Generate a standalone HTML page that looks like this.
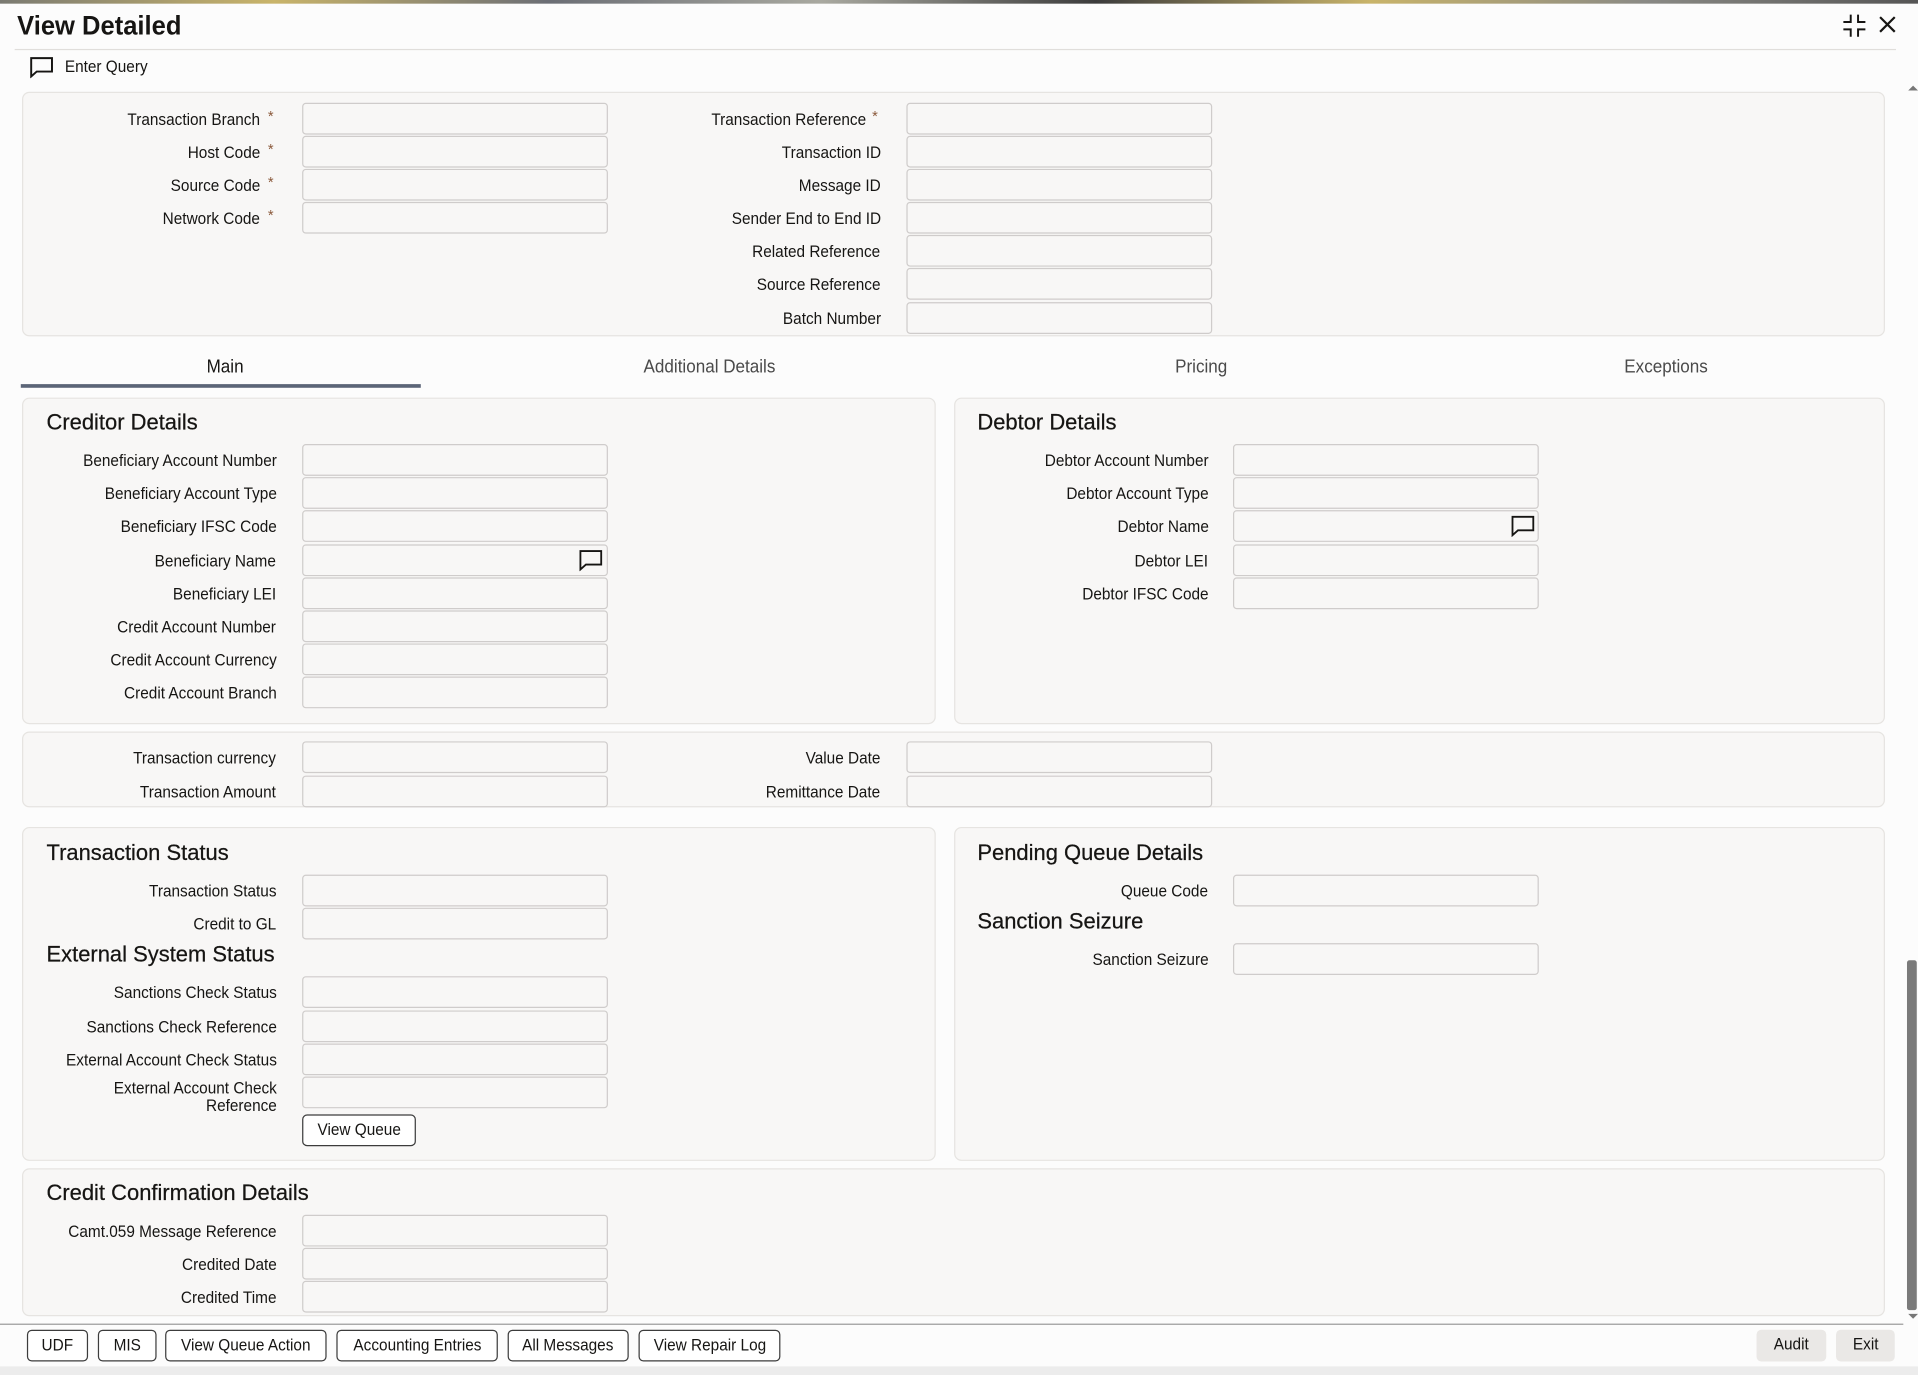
<!DOCTYPE html>
<html><head><meta charset="utf-8"><style>
*{box-sizing:border-box;margin:0;padding:0}
html,body{width:1918px;height:1375px;overflow:hidden;background:#fcfcfc}
#w{position:absolute;left:0;top:0;width:1568px;height:1124px;transform:scale(1.22321,1.2233);transform-origin:0 0;font-family:"Liberation Sans Narrow","Liberation Sans",sans-serif;color:#161513;font-size:13.5px}
.a{position:absolute}
.p{position:absolute;background:#f8f7f6;border:1px solid #e6e4e1;border-radius:6px}
.l{position:absolute;text-align:right;white-space:nowrap;transform:translateY(-50%) scaleX(0.93);transform-origin:right center;line-height:14px}
.i{position:absolute;width:250px;height:26px;border:1px solid #cfcccb;border-radius:3px;background:#f8f7f6;transform:translateY(-50%)}
.h{position:absolute;font-family:"Liberation Sans",sans-serif;font-size:18.5px;transform:translateY(-50%) scaleX(0.97);transform-origin:left center;color:#161513;white-space:nowrap;-webkit-text-stroke:0.2px #161513}
.s{color:#8b5a3c;font-size:12px;position:absolute}
.t{position:absolute;transform:translate(-50%,-50%) scaleX(0.93);font-size:15px;color:#4a4a4a;white-space:nowrap}
.b{position:absolute;top:1087px;height:26px;border:1px solid #3c3c3c;border-radius:4px;background:#fff;text-align:center;line-height:24px;font-size:13.5px;white-space:nowrap}
.b span{display:inline-block;transform:scaleX(0.93)}
</style></head><body><div id="w">
<div class="a" style="left:0;top:0;width:1568px;height:3px;background:linear-gradient(90deg,#7a7a72,#c9b46a,#6b6e75,#a9a9a0,#3c3c3c,#c9b46a,#8a8a85,#555)"></div>
<div class="a" style="left:14px;top:8px;font-family:'Liberation Sans',sans-serif;font-weight:bold;font-size:22px;transform:scaleX(0.95);transform-origin:left">View Detailed</div>
<div class="a" style="left:1506px;top:11px;width:20px;height:20px">
<svg width="20" height="20" viewBox="0 0 20 20" fill="none" stroke="#161513" stroke-width="1.6"><path d="M7 1v6H1M13 1v6h6M7 19v-6H1M13 19v-6h6"/></svg></div>
<div class="a" style="left:1536px;top:13px"><svg width="14" height="14" viewBox="0 0 14 14" stroke="#161513" stroke-width="1.8"><path d="M1 1l12 12M13 1L1 13"/></svg></div>
<div class="a" style="left:12px;top:40px;width:1538px;height:1px;background:#e0dedb"></div>
<div class="a" style="left:24px;top:46px"><svg width="20" height="18" viewBox="0 0 20 18" fill="none" stroke="#161513" stroke-width="1.6"><path d="M1.5 1.5h17v11H6l-4.5 4z"/></svg></div>
<div class="a" style="left:53px;top:47px;transform:scaleX(0.93);transform-origin:left">Enter Query</div>

<div class="p" style="left:18px;top:75px;width:1523px;height:200px"></div>
<div class="p" style="left:18px;top:325px;width:747px;height:267px"></div>
<div class="p" style="left:780px;top:325px;width:761px;height:267px"></div>
<div class="p" style="left:18px;top:598px;width:1523px;height:62px"></div>
<div class="p" style="left:18px;top:676px;width:747px;height:273px"></div>
<div class="p" style="left:780px;top:676px;width:761px;height:273px"></div>
<div class="p" style="left:18px;top:955px;width:1523px;height:121px"></div>

<div class="l" style="right:1355px;top:98px">Transaction Branch</div><span class="s" style="left:219px;top:88px">*</span><div class="i" style="left:247px;top:97px"></div>
<div class="l" style="right:1355px;top:125px">Host Code</div><span class="s" style="left:219px;top:115px">*</span><div class="i" style="left:247px;top:124px"></div>
<div class="l" style="right:1355px;top:152px">Source Code</div><span class="s" style="left:219px;top:142px">*</span><div class="i" style="left:247px;top:151px"></div>
<div class="l" style="right:1355px;top:179px">Network Code</div><span class="s" style="left:219px;top:169px">*</span><div class="i" style="left:247px;top:178px"></div>
<div class="l" style="right:860px;top:98px">Transaction Reference</div><span class="s" style="left:713px;top:88px">*</span><div class="i" style="left:741px;top:97px"></div>
<div class="l" style="right:848px;top:125px">Transaction ID</div><div class="i" style="left:741px;top:124px"></div>
<div class="l" style="right:848px;top:152px">Message ID</div><div class="i" style="left:741px;top:151px"></div>
<div class="l" style="right:848px;top:179px">Sender End to End ID</div><div class="i" style="left:741px;top:178px"></div>
<div class="l" style="right:848px;top:206px">Related Reference</div><div class="i" style="left:741px;top:205px"></div>
<div class="l" style="right:848px;top:233px">Source Reference</div><div class="i" style="left:741px;top:232px"></div>
<div class="l" style="right:848px;top:261px">Batch Number</div><div class="i" style="left:741px;top:260px"></div>

<div class="t" style="left:184px;top:300px;color:#161513">Main</div>
<div class="t" style="left:580px;top:300px">Additional Details</div>
<div class="t" style="left:982px;top:300px">Pricing</div>
<div class="t" style="left:1362px;top:300px">Exceptions</div>
<div class="a" style="left:17px;top:314px;width:327px;height:3px;background:#5b6577"></div>

<div class="h" style="left:38px;top:345px">Creditor Details</div>
<div class="l" style="right:1342px;top:377px">Beneficiary Account Number</div><div class="i" style="left:247px;top:376px"></div>
<div class="l" style="right:1342px;top:404px">Beneficiary Account Type</div><div class="i" style="left:247px;top:403px"></div>
<div class="l" style="right:1342px;top:431px">Beneficiary IFSC Code</div><div class="i" style="left:247px;top:430px"></div>
<div class="l" style="right:1342px;top:459px">Beneficiary Name</div><div class="i" style="left:247px;top:458px"></div>
<div class="a" style="left:473px;top:449px"><svg width="20" height="18" viewBox="0 0 20 18" fill="none" stroke="#161513" stroke-width="1.5"><path d="M1.5 1.5h17v11H6l-4.5 4z"/></svg></div>
<div class="l" style="right:1342px;top:486px">Beneficiary LEI</div><div class="i" style="left:247px;top:485px"></div>
<div class="l" style="right:1342px;top:513px">Credit Account Number</div><div class="i" style="left:247px;top:512px"></div>
<div class="l" style="right:1342px;top:540px">Credit Account Currency</div><div class="i" style="left:247px;top:539px"></div>
<div class="l" style="right:1342px;top:567px">Credit Account Branch</div><div class="i" style="left:247px;top:566px"></div>

<div class="h" style="left:799px;top:345px">Debtor Details</div>
<div class="l" style="right:580px;top:377px">Debtor Account Number</div><div class="i" style="left:1008px;top:376px"></div>
<div class="l" style="right:580px;top:404px">Debtor Account Type</div><div class="i" style="left:1008px;top:403px"></div>
<div class="l" style="right:580px;top:431px">Debtor Name</div><div class="i" style="left:1008px;top:430px"></div>
<div class="a" style="left:1235px;top:421px"><svg width="20" height="18" viewBox="0 0 20 18" fill="none" stroke="#161513" stroke-width="1.5"><path d="M1.5 1.5h17v11H6l-4.5 4z"/></svg></div>
<div class="l" style="right:580px;top:459px">Debtor LEI</div><div class="i" style="left:1008px;top:458px"></div>
<div class="l" style="right:580px;top:486px">Debtor IFSC Code</div><div class="i" style="left:1008px;top:485px"></div>

<div class="l" style="right:1342px;top:620px">Transaction currency</div><div class="i" style="left:247px;top:619px"></div>
<div class="l" style="right:1342px;top:648px">Transaction Amount</div><div class="i" style="left:247px;top:647px"></div>
<div class="l" style="right:848px;top:620px">Value Date</div><div class="i" style="left:741px;top:619px"></div>
<div class="l" style="right:848px;top:648px">Remittance Date</div><div class="i" style="left:741px;top:647px"></div>

<div class="h" style="left:38px;top:697px">Transaction Status</div>
<div class="l" style="right:1342px;top:729px">Transaction Status</div><div class="i" style="left:247px;top:728px"></div>
<div class="l" style="right:1342px;top:756px">Credit to GL</div><div class="i" style="left:247px;top:755px"></div>
<div class="h" style="left:38px;top:780px">External System Status</div>
<div class="l" style="right:1342px;top:812px">Sanctions Check Status</div><div class="i" style="left:247px;top:811px"></div>
<div class="l" style="right:1342px;top:840px">Sanctions Check Reference</div><div class="i" style="left:247px;top:839px"></div>
<div class="l" style="right:1342px;top:867px">External Account Check Status</div><div class="i" style="left:247px;top:866px"></div>
<div class="l" style="right:1342px;top:897px">External Account Check<br>Reference</div><div class="i" style="left:247px;top:893px"></div>
<div class="b" style="left:247px;top:911px;width:93px"><span>View Queue</span></div>

<div class="h" style="left:799px;top:697px">Pending Queue Details</div>
<div class="l" style="right:580px;top:729px">Queue Code</div><div class="i" style="left:1008px;top:728px"></div>
<div class="h" style="left:799px;top:753px">Sanction Seizure</div>
<div class="l" style="right:580px;top:785px">Sanction Seizure</div><div class="i" style="left:1008px;top:784px"></div>

<div class="h" style="left:38px;top:975px">Credit Confirmation Details</div>
<div class="l" style="right:1342px;top:1007px">Camt.059 Message Reference</div><div class="i" style="left:247px;top:1006px"></div>
<div class="l" style="right:1342px;top:1034px">Credited Date</div><div class="i" style="left:247px;top:1033px"></div>
<div class="l" style="right:1342px;top:1061px">Credited Time</div><div class="i" style="left:247px;top:1060px"></div>

<div class="a" style="left:1560px;top:70px;width:0;height:0;border:4px solid transparent;border-bottom:4px solid #777;border-top:0"></div>
<div class="a" style="left:1559px;top:785px;width:8px;height:286px;background:#7a7a7a;border-radius:2px"></div>
<div class="a" style="left:1560px;top:1074px;width:0;height:0;border:4px solid transparent;border-top:4px solid #777;border-bottom:0"></div>

<div class="a" style="left:0;top:1082px;width:1556px;height:1px;background:#9a9a9a"></div>
<div class="b" style="left:22px;width:50px"><span>UDF</span></div>
<div class="b" style="left:80px;width:48px"><span>MIS</span></div>
<div class="b" style="left:135px;width:132px"><span>View Queue Action</span></div>
<div class="b" style="left:275px;width:132px"><span>Accounting Entries</span></div>
<div class="b" style="left:415px;width:99px"><span>All Messages</span></div>
<div class="b" style="left:522px;width:116px"><span>View Repair Log</span></div>
<div class="b" style="left:1436px;width:57px;border:none;background:#eae8e6"><span>Audit</span></div>
<div class="b" style="left:1501px;width:48px;border:none;background:#eae8e6"><span>Exit</span></div>
<div class="a" style="left:0;top:1117px;width:1568px;height:7px;background:#ececec"></div>
</div></body></html>
